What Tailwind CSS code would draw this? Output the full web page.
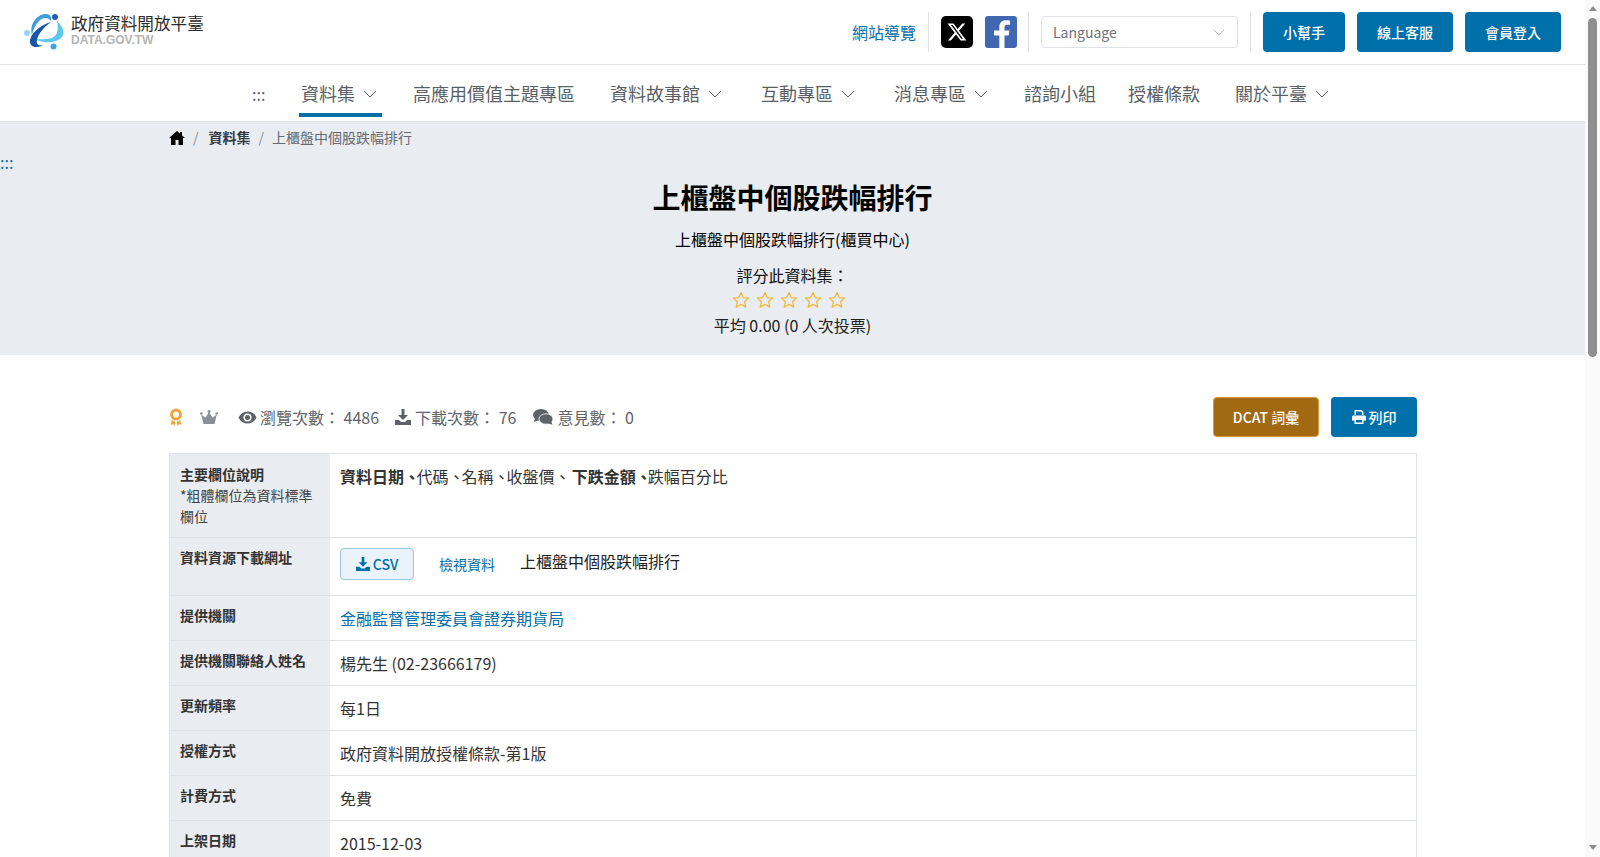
<!DOCTYPE html>
<html lang="zh-Hant">
<head>
    <meta charset="UTF-8">
    <title>上櫃盤中個股跌幅排行 - 政府資料開放平臺</title>
    <script src="https://cdn.jsdelivr.net/npm/@tailwindcss/browser@4"></script>
</head>
<body class="h-[857px] overflow-hidden bg-white text-[#212529] font-['Noto_Sans_CJK_TC','Noto_Sans',sans-serif]">
<div class="flex h-[857px]">
    <div class="w-[1585px] shrink-0 overflow-hidden">

        <!-- 上方列 -->
        <header class="h-[65px] border-b border-[#dee2e6] flex items-center justify-between pl-[24px] pr-[24px]">
            <a class="flex items-start gap-[7px] self-start mt-[13px]">
                <svg width="40" height="36" viewBox="0 0 40 36" class="mt-[1px]">
                    <path d="M8 21C5 10 13 0 22 0C26 0 28 3 27 7C24 3 19 3 15 7C11 11 9 16 8 21Z" fill="#3d9fe0"/>
                    <path d="M33 7C39 13 42 19 37 24C32 29 20 30 11 25C20 26 30 25 32.500 20C34 16 34 12 33 7Z" fill="#5cc8ec"/>
                    <path d="M27 8C19 10 8 17 6 26C5 33 12 35 19 31C14 32 12 30 13 26C14 20 20 13 27 8Z" fill="#1a56a5"/>
                    <circle cx="31" cy="3" r="3" fill="#2a5db0"/>
                    <circle cx="3" cy="19" r="3" fill="#8fd6f2"/>
                    <circle cx="29.500" cy="32.500" r="3" fill="#3fa5e0"/>
                </svg>
                <div>
                    <div class="text-[16.6px] text-[#2b2b2b] leading-[20px]">政府資料開放平臺</div>
                    <div class="text-[12px] font-bold text-[#b5b5b5] leading-[14px] font-['Liberation_Sans',sans-serif]">DATA.GOV.TW</div>
                </div>
            </a>
            <div class="flex items-center">
                <a class="text-[16px] text-[#0070ab] pr-[12px]">網站導覽</a>
                <div class="w-px h-[40px] bg-[#dee2e6]"></div>
                <div class="flex items-center gap-[12px] pl-[12px] pr-[11px]">
                    <svg width="32" height="32" viewBox="0 0 32 32"><rect width="32" height="32" rx="5" fill="#000"/><path transform="translate(5.500 5.500) scale(.87)" d="M18.244 2.250h3.308l-7.227 8.260 8.502 11.240H16.170l-5.214-6.817L4.990 21.750H1.680l7.730-8.835L1.254 2.250H8.080l4.713 6.231zm-1.161 17.520h1.833L7.084 4.126H5.117z" fill="#fff"/></svg>
                    <svg width="32" height="32" viewBox="0 0 32 32"><rect width="32" height="32" rx="3" fill="#4267b2"/><path d="M19.500 32V19.500h4.200l.8-5h-5V11.500c0-1.500.7-2.800 2.900-2.800H25V4.500C24 4.300 22.500 4.200 21 4.200c-4 0-6.700 2.400-6.700 6.800v3.500H9v5h5.300V32z" fill="#fff"/></svg>
                </div>
                <div class="w-px h-[40px] bg-[#dee2e6]"></div>
                <div class="ml-[12px] w-[197px] h-[32px] border border-[#dee2e6] rounded-[4px] flex items-center justify-between pl-[11px] pr-[12px] text-[14px] text-[#6c757d]">
                    <span>Language</span>
                    <svg width="12" height="12" viewBox="0 0 12 12" fill="none" stroke="#b5bac0" stroke-width="1"><path d="M1 4l5 5 5-5"/></svg>
                </div>
                <div class="w-px h-[40px] bg-[#dee2e6] ml-[12px]"></div>
                <div class="flex gap-[12px] ml-[12px]">
                    <a class="w-[82px] h-[40px] rounded-[4px] bg-[#0070ab] text-white text-[14px] font-medium flex items-center justify-center">小幫手</a>
                    <a class="w-[96px] h-[40px] rounded-[4px] bg-[#0070ab] text-white text-[14px] font-medium flex items-center justify-center">線上客服</a>
                    <a class="w-[96px] h-[40px] rounded-[4px] bg-[#0070ab] text-white text-[14px] font-medium flex items-center justify-center">會員登入</a>
                </div>
            </div>
        </header>

        <!-- 主選單 -->
        <nav class="h-[57px] border-b border-[#dee2e6] flex items-stretch text-[#5a5f65] text-[18px] pl-[252px] pt-[1px]">
            <a class="w-[47px] text-[16px] flex items-center">:::</a>
            <a class="relative w-[83px] pl-[2px] flex items-center gap-[8px]">資料集<svg width="14" height="8" viewBox="0 0 14 8" fill="none" stroke="currentColor"><path d="M1 1l6 6 6-6"/></svg><span class="absolute left-0 right-0 bottom-[4px] h-[4px] bg-[#0070ab]"></span></a>
            <a class="ml-[31px] flex items-center">高應用價值主題專區</a>
            <a class="ml-[35px] flex items-center gap-[8px]">資料故事館<svg width="14" height="8" viewBox="0 0 14 8" fill="none" stroke="currentColor"><path d="M1 1l6 6 6-6"/></svg></a>
            <a class="ml-[39px] flex items-center gap-[8px]">互動專區<svg width="14" height="8" viewBox="0 0 14 8" fill="none" stroke="currentColor"><path d="M1 1l6 6 6-6"/></svg></a>
            <a class="ml-[39px] flex items-center gap-[8px]">消息專區<svg width="14" height="8" viewBox="0 0 14 8" fill="none" stroke="currentColor"><path d="M1 1l6 6 6-6"/></svg></a>
            <a class="ml-[36px] flex items-center">諮詢小組</a>
            <a class="ml-[32px] flex items-center">授權條款</a>
            <a class="ml-[35px] flex items-center gap-[8px]">關於平臺<svg width="14" height="8" viewBox="0 0 14 8" fill="none" stroke="currentColor"><path d="M1 1l6 6 6-6"/></svg></a>
        </nav>

        <!-- 標題區 -->
        <section class="relative h-[233px] bg-[#e9ecf1]">
            <div class="flex items-center h-[31px] pl-[169px] text-[14px] gap-[8px]">
                <svg width="16" height="14" viewBox="0 0 16 14" fill="#000"><path d="M8 0L0 7h2v7h4.500V9h3v5H14V7h2L13 4.400V1h-2v1.700z"/></svg>
                <span class="text-[#8a8f96] mr-[2px]">/</span>
                <span class="font-bold text-[#343a40]">資料集</span>
                <span class="text-[#8a8f96]">/</span>
                <span class="text-[#666b72]">上櫃盤中個股跌幅排行</span>
            </div>
            <span class="absolute left-0 top-[30px] text-[16px] leading-[20px] text-[#0070ab]">:::</span>
            <div class="flex flex-col items-center text-center">
                <h1 class="mt-[23px] text-[28px] leading-[42px] font-bold text-black">上櫃盤中個股跌幅排行</h1>
                <p class="mt-[9px] text-[16px] leading-[24px] text-black">上櫃盤中個股跌幅排行(櫃買中心)</p>
                <p class="mt-[12px] text-[16px] leading-[24px] text-[#111]">評分此資料集：</p>
                <div class="flex gap-[6px] h-[24px] items-center mr-[7px] mt-[1px]">
                    <svg width="18" height="18" viewBox="0 0 24 24" fill="none" stroke="#f5b83d" stroke-width="1.700" stroke-linejoin="round"><path d="M12 2l3 6.700 7.200.800-5.400 4.800 1.500 7.200L12 17.800 5.700 21.500l1.500-7.200L1.800 9.500 9 8.700z"/></svg>
                    <svg width="18" height="18" viewBox="0 0 24 24" fill="none" stroke="#f5b83d" stroke-width="1.700" stroke-linejoin="round"><path d="M12 2l3 6.700 7.200.800-5.400 4.800 1.500 7.200L12 17.800 5.700 21.500l1.500-7.200L1.800 9.500 9 8.700z"/></svg>
                    <svg width="18" height="18" viewBox="0 0 24 24" fill="none" stroke="#f5b83d" stroke-width="1.700" stroke-linejoin="round"><path d="M12 2l3 6.700 7.200.800-5.400 4.800 1.500 7.200L12 17.800 5.700 21.500l1.500-7.200L1.800 9.500 9 8.700z"/></svg>
                    <svg width="18" height="18" viewBox="0 0 24 24" fill="none" stroke="#f5b83d" stroke-width="1.700" stroke-linejoin="round"><path d="M12 2l3 6.700 7.200.800-5.400 4.800 1.500 7.200L12 17.800 5.700 21.500l1.500-7.200L1.800 9.500 9 8.700z"/></svg>
                    <svg width="18" height="18" viewBox="0 0 24 24" fill="none" stroke="#f5b83d" stroke-width="1.700" stroke-linejoin="round"><path d="M12 2l3 6.700 7.200.800-5.400 4.800 1.500 7.200L12 17.800 5.700 21.500l1.500-7.200L1.800 9.500 9 8.700z"/></svg>
                </div>
                <p class="mt-[1px] text-[16px] leading-[24px] text-[#222]">平均 0.00 (0 人次投票)</p>
            </div>
        </section>

        <!-- 統計與按鈕 -->
        <div class="ml-[169px] w-[1248px] mt-[42px] h-[40px] flex items-center justify-between">
            <div class="flex items-center text-[16px] text-[#5f6369]">
                <svg width="14" height="18" viewBox="0 0 14 18" class="mr-[17px]"><circle cx="7" cy="6.500" r="4.500" fill="none" stroke="#f0a53a" stroke-width="3"/><path d="M3 12l-1.500 5 2.500-1 1.500 2 1-4zM11 12l1.500 5-2.500-1-1.500 2-1-4z" fill="#f0a53a"/></svg>
                <svg width="18" height="14" viewBox="0 0 18 14" fill="#8b8f9a" class="mr-[20px]"><path d="M3.500 14h11l2.300-9.500-4.300 3.200L9 2 5.500 7.700 1.200 4.500z"/><circle cx="9" cy="1.500" r="1.500"/><circle cx="1.300" cy="3.500" r="1.300"/><circle cx="16.700" cy="3.500" r="1.300"/></svg>
                <svg width="19" height="13" viewBox="0 0 18 13" class="mr-[3px]"><path d="M0 6.500C2 2.500 5 .500 9 .500s7 2 9 6c-2 4-5 6-9 6s-7-2-9-6z" fill="#5f6369"/><circle cx="9" cy="6.500" r="4" fill="#fff"/><circle cx="9" cy="6.500" r="2.500" fill="#5f6369"/></svg>
                <span>瀏覽次數： 4486</span>
                <svg width="16" height="16" viewBox="0 0 16 16" fill="#5f6369" class="ml-[16px] mr-[4px]"><path d="M6.500 0h3v6H13L8 11 3 6h3.500zM0 11h4l2 2h4l2-2h4v5H0z"/></svg>
                <span>下載次數： 76</span>
                <svg width="20" height="16" viewBox="0 0 20 16" fill="#5f6369" class="ml-[17px] mr-[4px]"><ellipse cx="8" cy="6" rx="8" ry="6"/><path d="M2 9l-1 4 5-2z"/><ellipse cx="13" cy="10" rx="7" ry="5.200" stroke="#fff" stroke-width=".8"/><path d="M18 12l1.500 3.700-5-1.500z"/></svg>
                <span>意見數： 0</span>
            </div>
            <div class="flex gap-[12px]">
                <a class="w-[106px] h-[40px] rounded-[4px] bg-[#a16912] border border-[#d89a3a] text-white text-[14px] font-medium flex items-center justify-center">DCAT 詞彙</a>
                <a class="w-[86px] h-[40px] rounded-[4px] bg-[#0070ab] text-white text-[14px] font-medium flex items-center justify-center gap-[3px]">
                    <svg width="14" height="14" viewBox="0 0 14 14" fill="#fff"><path d="M2.500 0h7L11.500 2v3h-1.500V2.600L9 1.500H4v3.500H2.500zM1.500 5.500h11c.8 0 1.500.7 1.500 1.500v3.500h-2.500V14h-9v-3.500H0V7c0-.8.7-1.500 1.500-1.500zM4 10v2.500h6V10z"/></svg>
                    列印
                </a>
            </div>
        </div>

        <!-- 資料表 -->
        <div class="ml-[169px] w-[1248px] mt-[16px] border-x border-t border-[#dee2e6] text-[16px] text-[#333]">
            <div class="flex h-[84px] border-b border-[#dee2e6]">
                <div class="w-[160px] shrink-0 bg-[#e9ecf1] px-[10px] pt-[10px] text-[14px] leading-[21px] text-[#444]">
                    <div class="font-bold text-[#333]">主要欄位說明</div>
                    <div>*粗體欄位為資料標準欄位</div>
                </div>
                <div class="pl-[10px] pt-[10px] leading-[24px]"><b>資料日期<span class="tracking-[-3.5px]">、</span></b>代碼<span class="tracking-[-3px]">、</span>名稱<span class="tracking-[-3px]">、</span>收盤價<span class="tracking-[1px]">、</span><b>下跌金額<span class="tracking-[-4px]">、</span></b>跌幅百分比</div>
            </div>
            <div class="flex h-[58px] border-b border-[#dee2e6]">
                <div class="w-[160px] shrink-0 bg-[#e9ecf1] px-[10px] pt-[9px] text-[14px] leading-[21px] font-bold">資料資源下載網址</div>
                <div class="pl-[10px] pt-[10px] flex items-start">
                    <a class="w-[74px] h-[32px] rounded-[4px] border border-[#9cc6e6] bg-[#eaf3fc] text-[#0070ab] text-[14px] font-medium flex items-center justify-center gap-[3px]">
                        <svg width="14" height="14" viewBox="0 0 16 16" fill="#0070ab"><path d="M6.500 0h3v6H13L8 11 3 6h3.500zM0 11h4l2 2h4l2-2h4v5H0z"/></svg>
                        CSV
                    </a>
                    <a class="ml-[25px] text-[14px] leading-[32px] text-[#0070ab]">檢視資料</a>
                    <span class="ml-[25px] leading-[26px] text-[#222]">上櫃盤中個股跌幅排行</span>
                </div>
            </div>
            <div class="flex h-[45px] border-b border-[#dee2e6]">
                <div class="w-[160px] shrink-0 bg-[#e9ecf1] px-[10px] pt-[9px] text-[14px] leading-[21px] font-bold">提供機關</div>
                <div class="pl-[10px] pt-[10px] leading-[24px] text-[#0070ab]">金融監督管理委員會證券期貨局</div>
            </div>
            <div class="flex h-[45px] border-b border-[#dee2e6]">
                <div class="w-[160px] shrink-0 bg-[#e9ecf1] px-[10px] pt-[9px] text-[14px] leading-[21px] font-bold">提供機關聯絡人姓名</div>
                <div class="pl-[10px] pt-[10px] leading-[24px]">楊先生 (02-23666179)</div>
            </div>
            <div class="flex h-[45px] border-b border-[#dee2e6]">
                <div class="w-[160px] shrink-0 bg-[#e9ecf1] px-[10px] pt-[9px] text-[14px] leading-[21px] font-bold">更新頻率</div>
                <div class="pl-[10px] pt-[10px] leading-[24px]">每1日</div>
            </div>
            <div class="flex h-[45px] border-b border-[#dee2e6]">
                <div class="w-[160px] shrink-0 bg-[#e9ecf1] px-[10px] pt-[9px] text-[14px] leading-[21px] font-bold">授權方式</div>
                <div class="pl-[10px] pt-[10px] leading-[24px]">政府資料開放授權條款-第1版</div>
            </div>
            <div class="flex h-[45px] border-b border-[#dee2e6]">
                <div class="w-[160px] shrink-0 bg-[#e9ecf1] px-[10px] pt-[9px] text-[14px] leading-[21px] font-bold">計費方式</div>
                <div class="pl-[10px] pt-[10px] leading-[24px]">免費</div>
            </div>
            <div class="flex h-[45px] border-b border-[#dee2e6]">
                <div class="w-[160px] shrink-0 bg-[#e9ecf1] px-[10px] pt-[9px] text-[14px] leading-[21px] font-bold">上架日期</div>
                <div class="pl-[10px] pt-[10px] leading-[24px]">2015-12-03</div>
            </div>
        </div>
    </div>

    <!-- 捲軸 -->
    <div class="w-[15px] h-[857px] bg-[#fafafa] flex flex-col items-center">
        <div class="h-[15px] pt-[1px] flex items-center"><div class="w-0 h-0 border-x-[4.5px] border-x-transparent border-b-[5px] border-b-[#8c8c8c]"></div></div>
        <div class="w-[9px] h-[339px] mt-[3px] rounded-[5px] bg-[#8f8f8f]"></div>
        <div class="mt-auto mb-[2px] h-[15px] flex items-center"><div class="w-0 h-0 border-x-[4.5px] border-x-transparent border-t-[5px] border-t-[#8c8c8c]"></div></div>
    </div>
</div>
</body>
</html>
